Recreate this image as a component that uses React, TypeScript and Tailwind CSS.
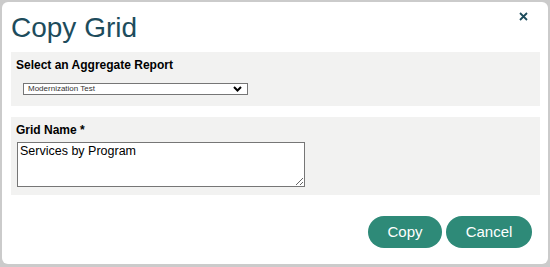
export default function App() {
  return (
    <div className="w-[550px] h-[267px] bg-[#cbcbcb] pt-[2px] pl-[2px] font-['Liberation_Sans',Arial,sans-serif]">
      <div className="relative w-[546px] h-[262px] bg-white rounded-[6px] flex flex-col">
        <h1 className="pl-[9px] pt-[12px] text-[28px] leading-none text-[#1d4c5c] font-normal">Copy Grid</h1>
        <button className="absolute right-[20px] top-[10px] text-[#1d4c5c]" aria-label="Close">
          <svg width="9" height="9" viewBox="0 0 9 9">
            <path d="M1 1 L8 8 M8 1 L1 8" stroke="currentColor" strokeWidth="1.8" />
          </svg>
        </button>

        <div className="mt-[10px] ml-[9px] w-[529px] h-[54px] bg-[#f2f2f1] pt-[6px] pl-[5px]">
          <div className="text-[12px] leading-[14px] font-bold text-black">Select an Aggregate Report</div>
          <div className="mt-[11px] ml-[7px] w-[225px] h-[12px] border border-[#767676] bg-white flex items-center justify-between pl-[4px] pr-[5px]">
            <span className="text-[8px] leading-none text-[#333]">Modernization Test</span>
            <svg width="9" height="6" viewBox="0 0 9 6">
              <path d="M1 1 L4.5 4.5 L8 1" stroke="#000" strokeWidth="2" fill="none" />
            </svg>
          </div>
        </div>

        <div className="mt-[11px] ml-[9px] w-[529px] h-[78px] bg-[#f2f2f1] pt-[6px] pl-[5px]">
          <div className="text-[12px] leading-[14px] font-bold text-black">Grid Name *</div>
          <textarea
            defaultValue="Services by Program"
            className="mt-[5px] ml-[1px] block w-[288px] h-[45px] border border-[#767676] bg-white px-[2px] py-[1px] text-[12.5px] leading-[15px] text-black outline-none"
          />
        </div>

        <div className="mt-[21px] pr-[16px] flex justify-end gap-[4px]">
          <button className="w-[74px] h-[32px] rounded-full bg-[#2e8a78] text-white text-[15px]">Copy</button>
          <button className="w-[86px] h-[32px] rounded-full bg-[#2e8a78] text-white text-[15px]">Cancel</button>
        </div>
      </div>
    </div>
  );
}
